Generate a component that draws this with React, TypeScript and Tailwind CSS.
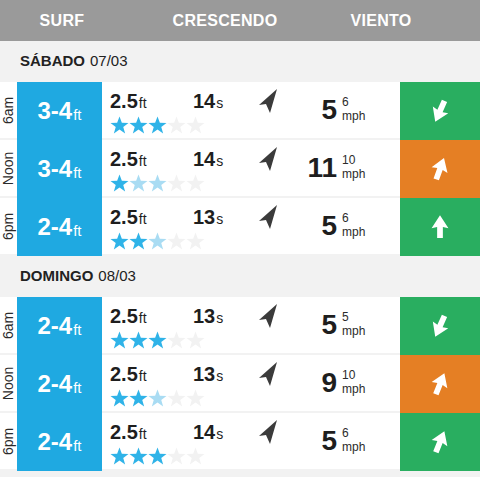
type Star = 0 | 1 | 2;

interface Row {
  time: string;
  surf: string;
  swell: string;
  period: string;
  stars: Star[];
  wind: string;
  gust: string;
  color: "green" | "orange";
  dir: number;
}

const days: { name: string; date: string; rows: Row[] }[] = [
  {
    name: "SÁBADO",
    date: "07/03",
    rows: [
      { time: "6am", surf: "3-4", swell: "2.5", period: "14", stars: [2, 2, 2, 0, 0], wind: "5", gust: "6", color: "green", dir: 204 },
      { time: "Noon", surf: "3-4", swell: "2.5", period: "14", stars: [2, 1, 1, 0, 0], wind: "11", gust: "10", color: "orange", dir: 20 },
      { time: "6pm", surf: "2-4", swell: "2.5", period: "13", stars: [2, 2, 1, 0, 0], wind: "5", gust: "6", color: "green", dir: 0 },
    ],
  },
  {
    name: "DOMINGO",
    date: "08/03",
    rows: [
      { time: "6am", surf: "2-4", swell: "2.5", period: "13", stars: [2, 2, 2, 0, 0], wind: "5", gust: "5", color: "green", dir: 204 },
      { time: "Noon", surf: "2-4", swell: "2.5", period: "13", stars: [2, 2, 1, 0, 0], wind: "9", gust: "10", color: "orange", dir: 22 },
      { time: "6pm", surf: "2-4", swell: "2.5", period: "14", stars: [2, 2, 2, 0, 0], wind: "5", gust: "6", color: "green", dir: 22 },
    ],
  },
];

const starFill = ["#f2f2f2", "#a9dcf3", "#2fb3e8"];

function StarIcon({ level }: { level: Star }) {
  return (
    <svg width="19" height="18" viewBox="0 0 24 23">
      <polygon
        points="12,0.5 15,8.6 23.5,8.8 16.8,14 19.2,22.3 12,17.4 4.8,22.3 7.2,14 0.5,8.8 9,8.6"
        fill={starFill[level]}
      />
    </svg>
  );
}

function NavArrow() {
  return (
    <svg width="22" height="26" viewBox="0 0 22 26">
      <polygon points="20,1 2,17 9,16 13,25" fill="#3b3b3b" />
    </svg>
  );
}

function WindArrow({ dir }: { dir: number }) {
  return (
    <svg width="26" height="26" viewBox="0 0 20 20" style={{ transform: `rotate(${dir}deg)` }}>
      <path d="M10 1 L16.5 11 L12.2 10 L12.2 18.5 L7.8 18.5 L7.8 10 L3.5 11 Z" fill="#ffffff" />
    </svg>
  );
}

function ForecastRow({ row }: { row: Row }) {
  return (
    <div className="flex h-[58px]">
      <div className="w-[17px] flex items-center justify-center border-b-2 border-[#f2f2f2] bg-white">
        <span className="-rotate-90 whitespace-nowrap text-[14px] text-[#2b2b2b]">{row.time}</span>
      </div>
      <div className="w-[85px] bg-[#1fa9e1] flex items-center justify-center text-white">
        <span className="text-[24px] font-bold leading-none">{row.surf}</span>
        <span className="text-[15px] leading-none mt-[6px] ml-[1px]">ft</span>
      </div>
      <div className="flex-1 flex bg-white border-b-2 border-[#f2f2f2] pl-[8px]">
        <div className="w-[147px] pt-[9px]">
          <div className="flex items-baseline text-[#1e1e1e]">
            <div className="w-[83px] flex items-baseline">
              <span className="text-[20px] font-bold leading-none">{row.swell}</span>
              <span className="text-[14px] ml-[1px] leading-none">ft</span>
            </div>
            <span className="text-[20px] font-bold leading-none">{row.period}</span>
            <span className="text-[14px] ml-[1px] leading-none">s</span>
          </div>
          <div className="flex mt-[5px]">
            {row.stars.map((s, i) => (
              <StarIcon key={i} level={s} />
            ))}
          </div>
        </div>
        <div className="w-[24px] pt-[6px]">
          <NavArrow />
        </div>
        <div className="flex items-center pb-[1px]">
          <span className="w-[56px] text-right text-[28px] font-bold leading-none text-[#1e1e1e]">{row.wind}</span>
          <div className="ml-[5px] flex flex-col text-[12px] leading-[14px] text-[#2b2b2b] -mt-[2px]">
            <span>{row.gust}</span>
            <span>mph</span>
          </div>
        </div>
      </div>
      <div
        className={
          "w-[80px] flex items-center justify-center " +
          (row.color === "green" ? "bg-[#29ae60]" : "bg-[#e57f24]")
        }
      >
        <WindArrow dir={row.dir} />
      </div>
    </div>
  );
}

export default function App() {
  return (
    <div className="min-h-screen bg-[#f2f2f2]" style={{ fontFamily: '"Liberation Sans", Arial, sans-serif' }}>
      <div className="h-[41px] bg-[#9a9a9a] flex items-center text-white font-bold text-[16px] tracking-[0.3px]">
        <div className="w-[124px] text-center">SURF</div>
        <div className="w-[202px] text-center">CRESCENDO</div>
        <div className="w-[110px] text-center">VIENTO</div>
      </div>
      {days.map((day) => (
        <div key={day.name}>
          <div className="h-[41px] flex items-center pl-[20px] text-[15px] text-[#222]">
            <span className="font-bold">{day.name}</span>
            <span className="ml-[5px]">{day.date}</span>
          </div>
          {day.rows.map((row, i) => (
            <ForecastRow key={i} row={row} />
          ))}
        </div>
      ))}
    </div>
  );
}
